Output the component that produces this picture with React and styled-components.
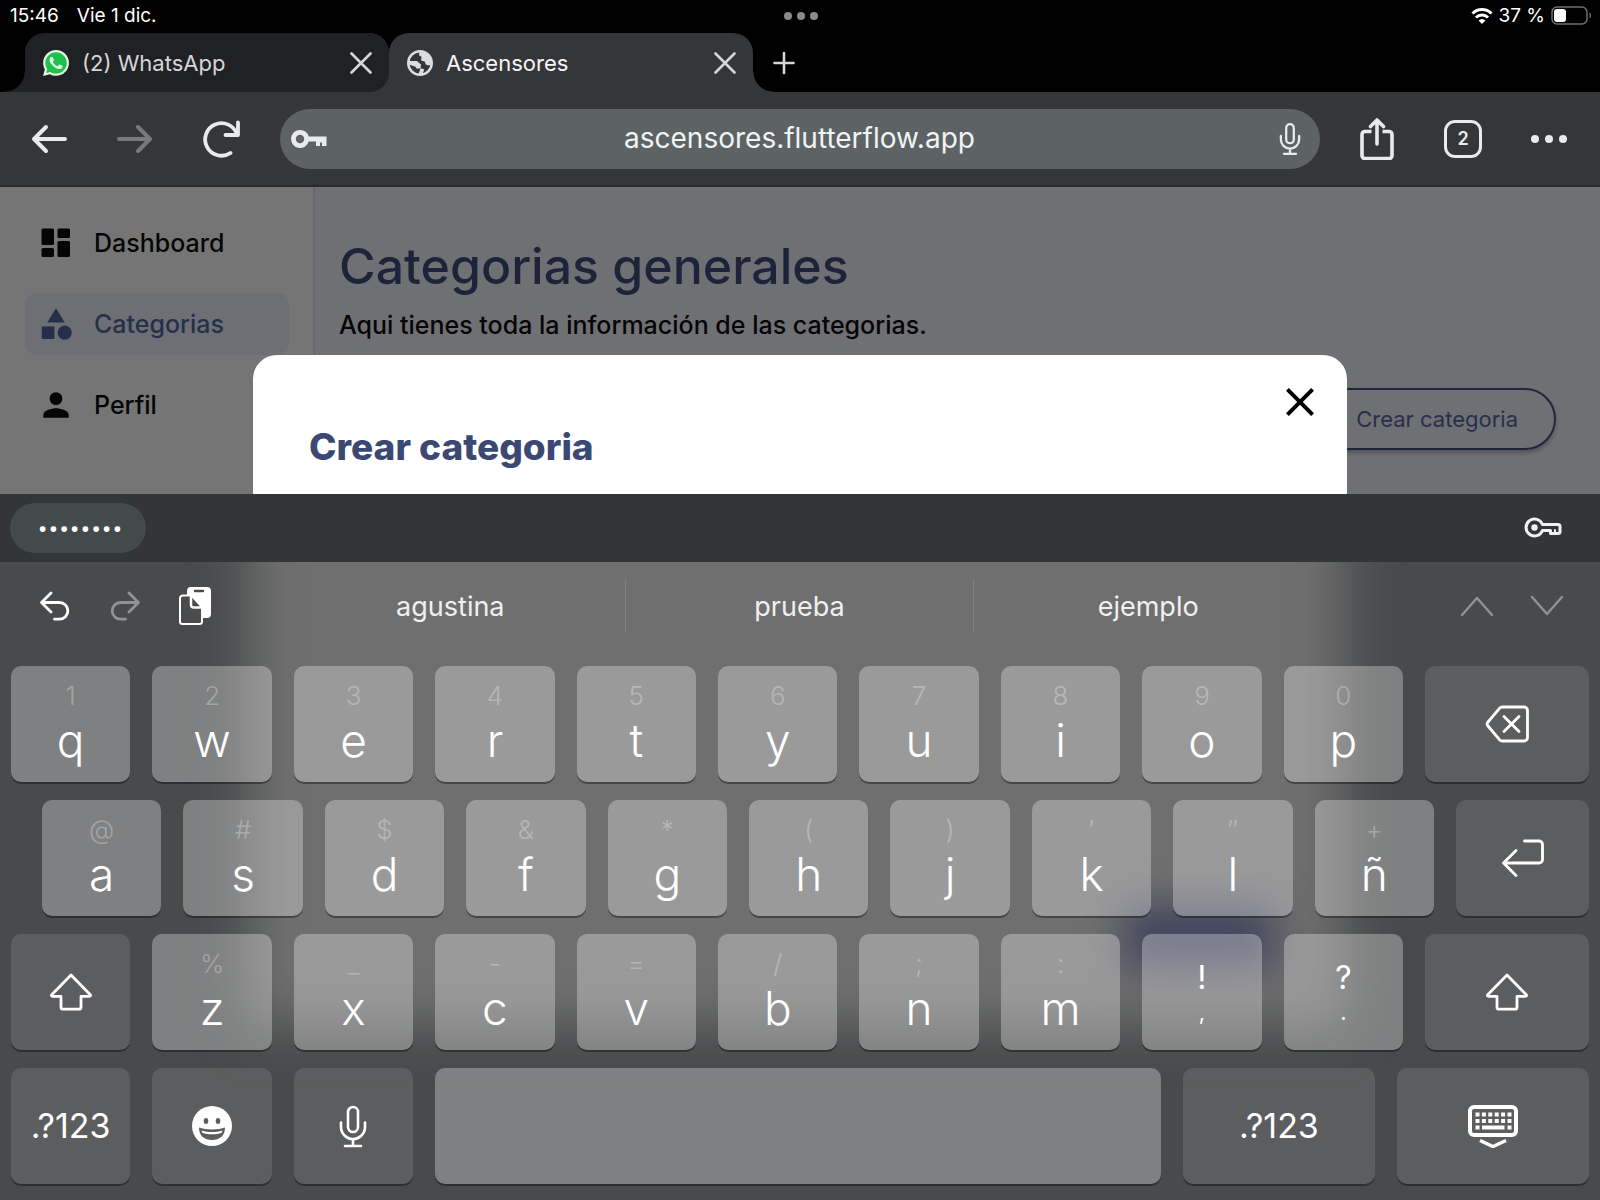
import styled, { createGlobalStyle } from "styled-components";
import { MdCategory, MdClose, MdPerson } from "react-icons/md";

const GlobalStyle = createGlobalStyle`
  * {
    box-sizing: border-box;
  }
  body {
    margin: 0;
    background: #000;
    font-family: Inter, "Liberation Sans", sans-serif;
  }
  button {
    margin: 0;
    padding: 0;
    border: none;
    background: none;
    color: inherit;
    font: inherit;
    cursor: pointer;
  }
  svg {
    display: block;
    flex: none;
  }
`;

const Screen = styled.div`
  display: flex;
  flex-direction: column;
  min-height: 100vh;
  overflow: hidden;
`;

/* ---------- status bar ---------- */

const StatusBar = styled.header`
  display: grid;
  grid-template-columns: 1fr auto 1fr;
  align-items: center;
  height: 33px;
  padding: 0 8px 2px 10px;
  color: #fff;
  font-size: 19px;
  line-height: 24px;
`;

const StatusLeft = styled.div`
  display: flex;
  gap: 18px;
`;

const StatusRight = styled.div`
  display: flex;
  align-items: center;
  justify-content: flex-end;
  gap: 6px;
`;

/* ---------- tabs ---------- */

const TabStrip = styled.nav`
  display: flex;
  height: 59px;
  padding-left: 5px;
`;

const Flare = styled.span`
  align-self: flex-end;
  width: 20px;
  height: 20px;
  background: radial-gradient(
    circle at ${({ $side }) => ($side === "left" ? "0 0" : "100% 0")},
    transparent 19px,
    ${({ $side }) => ($side === "left" ? "#202124" : "#353639")} 20px
  );
`;

const TabSlot = styled.div`
  width: 364px;
  background: ${({ $active }) => ($active ? "#000" : "linear-gradient(90deg, #202124 50%, #353639 50%)")};
  ${({ $active }) => !$active && "border-radius: 20px 20px 0 0;"}
`;

const Tab = styled.div`
  display: flex;
  align-items: center;
  gap: 13px;
  height: 100%;
  padding: 0 17px 0 18px;
  border-radius: ${({ $active }) => ($active ? "20px 20px 0 0" : "20px 20px 20px 0")};
  background: ${({ $active }) => ($active ? "#353639" : "#202124")};
  color: ${({ $active }) => ($active ? "#f4f5f6" : "#d5d6d9")};
`;

const TabTitle = styled.span`
  flex: 1;
  font-size: 22px;
  line-height: 28px;
`;

const NewTab = styled.button`
  align-self: center;
`;

/* ---------- toolbar ---------- */

const Toolbar = styled.div`
  display: flex;
  align-items: center;
  height: 95px;
  padding: 0 8px 0 6px;
  border-bottom: 2px solid #28292b;
  background: #353638;
  color: #e8eaed;
`;

const ToolButton = styled.button`
  display: grid;
  place-items: center;
  width: 86px;
  height: 60px;
  opacity: ${({ $dim }) => ($dim ? 0.38 : 1)};
`;

const AddressBar = styled.div`
  display: flex;
  flex: 1;
  align-items: center;
  height: 60px;
  margin: 0 14px 0 16px;
  padding: 0 18px 0 11px;
  border-radius: 30px;
  background: #5d6365;
`;

const AddressInput = styled.input`
  flex: 1;
  min-width: 0;
  height: 40px;
  padding: 0 6px 2px 0;
  border: none;
  outline: none;
  background: transparent;
  color: #f1f3f4;
  font-family: inherit;
  font-size: 28px;
  text-align: center;
`;

const TabCount = styled.span`
  display: grid;
  place-items: center;
  width: 38px;
  height: 38px;
  border: 3px solid #e8eaed;
  border-radius: 11px;
  font-size: 18px;
  font-weight: 600;
  line-height: 20px;
`;

/* ---------- web page ---------- */

const Page = styled.div`
  position: relative;
  display: flex;
  flex: 1;
  min-height: 307px;
  overflow: hidden;
  background: #6f7074;
`;

const Sidebar = styled.aside`
  display: flex;
  flex-direction: column;
  gap: 19px;
  width: 315px;
  padding: 25px 24px 0 25px;
  border-right: 2px solid #68686f;
  background: #757575;
`;

const SideLink = styled.a`
  display: flex;
  align-items: center;
  gap: 19px;
  height: 62px;
  padding-left: 12px;
  border-radius: 12px;
  background: ${({ $active }) => ($active ? "#6d6f74" : "transparent")};
  color: ${({ $active }) => ($active ? "#262f4a" : "#050505")};
  font-size: 25px;
  font-weight: 500;
  text-decoration: none;
`;

const Main = styled.main`
  display: flex;
  flex: 1;
  flex-direction: column;
  padding: 49px 44px 0 24px;
`;

const Title = styled.h1`
  margin: 0;
  color: #1d2439;
  font-size: 50px;
  font-weight: 500;
  line-height: 60px;
`;

const Subtitle = styled.p`
  margin: 13px 0 47px;
  color: #050506;
  font-size: 25px;
  font-weight: 500;
  line-height: 32px;
`;

const OutlineButton = styled.button`
  align-self: flex-end;
  height: 62px;
  padding: 0 36px;
  border: 2px solid #1f273d;
  border-radius: 31px;
  box-shadow: 0 3px 4px rgba(0, 0, 0, 0.25);
  color: #262f4a;
  font-size: 22px;
`;

const Overlay = styled.div`
  position: absolute;
  inset: 0;
  padding: 168px 253px 0;
`;

const Dialog = styled.section`
  height: 100%;
  padding: 23px 23px 0 56px;
  border-radius: 24px 24px 0 0;
  background: #fff;
`;

const DialogTop = styled.div`
  display: flex;
  justify-content: flex-end;
  height: 48px;
  color: #000;
`;

const DialogTitle = styled.h2`
  margin: 3px 0 0;
  color: #3b4874;
  font-size: 37px;
  font-weight: 800;
  line-height: 36px;
`;

/* ---------- keyboard ---------- */

const AccessoryBar = styled.div`
  display: flex;
  align-items: center;
  justify-content: space-between;
  height: 68px;
  padding: 0 38px 0 10px;
  background: #343537;
  color: #fff;
`;

const PasswordPill = styled.button`
  width: 136px;
  height: 50px;
  padding-left: 4px;
  border-radius: 25px;
  background: #424a4b;
  font-family: "Open Sans", sans-serif;
  font-size: 39px;
  font-weight: 600;
  line-height: 48px;
`;

const Keyboard = styled.div`
  position: relative;
  overflow: hidden;
  padding: 0 11px 16px;
  background: #484a4b;
  color: #fff;
`;

/* the dialog showing through the translucent keyboard */
const Glow = styled.div`
  position: absolute;
  top: -100px;
  right: 256px;
  bottom: 174px;
  left: 248px;
  background: #6f6f6f;
  filter: blur(26px);
`;

const BlueGlow = styled.div`
  position: absolute;
  right: 326px;
  bottom: 232px;
  width: 150px;
  height: 62px;
  background: #40445d;
  filter: blur(20px);
`;

const SuggestionBar = styled.div`
  position: relative;
  display: grid;
  grid-template-columns: 265px 1fr 267px;
  align-items: center;
  height: 88px;
  margin-bottom: 16px;
`;

const EditTools = styled.div`
  display: flex;
  align-items: center;
  padding-left: 9px;
`;

const EditButton = styled.button`
  display: grid;
  place-items: center;
  width: 70px;
  height: 48px;
  opacity: ${({ $dim }) => ($dim ? 0.4 : 1)};
`;

const NavTools = styled.div`
  display: flex;
  justify-content: flex-end;
  padding-right: 7px;
`;

const Suggestions = styled.div`
  display: grid;
  grid-template-columns: repeat(3, 1fr);
`;

const Suggestion = styled.button`
  height: 54px;
  color: #f0f0f0;
  font-size: 27px;
  & + & {
    border-left: 1px solid rgba(255, 255, 255, 0.12);
  }
`;

const Rows = styled.div`
  position: relative;
  display: flex;
  flex-direction: column;
  gap: 18px;
`;

const Row = styled.div`
  display: flex;
  gap: 22px;
  padding-left: ${({ $indent }) => ($indent ? "31px" : "0")};
`;

const KeyBase = styled.button`
  height: 116px;
  border-radius: 10px;
  box-shadow: 0 2px 0 rgba(0, 0, 0, 0.36);
`;

const LetterKey = styled(KeyBase)`
  display: flex;
  flex: 1 1 0;
  flex-direction: column;
  align-items: center;
  gap: 4px;
  min-width: 0;
  padding-top: 15px;
  background: rgba(255, 255, 255, 0.3);
`;

const Hint = styled.span`
  height: 30px;
  color: rgba(255, 255, 255, 0.3);
  font-size: 26px;
  font-weight: 300;
  line-height: 30px;
`;

const Letter = styled.span`
  font-size: 46px;
  font-weight: 300;
  line-height: 50px;
`;

const MarkKey = styled(LetterKey)`
  gap: 0;
  padding-top: 24px;
`;

const UpperMark = styled.span`
  font-size: 32px;
  line-height: 40px;
`;

const LowerMark = styled.span`
  font-size: 22px;
  line-height: 28px;
`;

const widths = {
  letter: "flex: 0 0 calc((100% - 384px) / 10);",
  grow: "flex: 1 1 0;",
  delete: "flex: 0 0 164px;",
  enter: "flex: 0 0 133px;",
  wide: "flex: 0 0 192px;",
};

const ActionKey = styled(KeyBase)`
  display: grid;
  place-items: center;
  ${({ $size }) => widths[$size]}
  min-width: 0;
  background: rgba(255, 255, 255, ${({ $light }) => ($light ? 0.3 : 0.11)});
  font-size: 34px;
  line-height: 40px;
`;

/* ---------- icons ---------- */

const Line = styled.svg`
  fill: none;
  stroke: currentColor;
  stroke-width: ${({ $weight = 3 }) => $weight};
  stroke-linecap: round;
  stroke-linejoin: round;
`;

const WifiIcon = () => (
  <Line $weight={3} width="22" height="18" viewBox="0 0 22 18">
    <path d="M1.500 6.500a13.500 13.500 0 0 1 19 0M5 10.500a8.500 8.500 0 0 1 12 0" strokeLinecap="butt" />
    <path d="M11 17l-3.400-3.400a5 5 0 0 1 6.800 0z" fill="currentColor" stroke="none" />
  </Line>
);

const BatteryIcon = () => (
  <svg width="41" height="19" viewBox="0 0 41 19" fill="none">
    <rect x="1" y="1" width="35" height="17" rx="5" stroke="#6f6f6f" strokeWidth="1.500" />
    <rect x="3" y="3" width="12" height="13" rx="3" fill="#fff" />
    <path d="M38.500 6.500c2 1 2 5 0 6z" fill="#6f6f6f" />
  </svg>
);

const DotsIcon = ({ width, radius, color }) => (
  <svg width={width} height="12" viewBox={`0 0 ${width} 12`} fill={color}>
    <circle cx={radius} cy="6" r={radius} />
    <circle cx={width / 2} cy="6" r={radius} />
    <circle cx={width - radius} cy="6" r={radius} />
  </svg>
);

const WhatsAppIcon = () => (
  <svg width="26" height="26" viewBox="0 0 24 24">
    <path
      fill="#e4f7e8"
      d="M.057 24l1.687-6.163c-1.041-1.804-1.588-3.849-1.587-5.946.003-6.556 5.338-11.891 11.893-11.891 3.181.001 6.167 1.240 8.413 3.488 2.245 2.248 3.481 5.236 3.480 8.414-.003 6.557-5.338 11.892-11.893 11.892-1.990-.001-3.951-.5-5.688-1.448l-6.305 1.654z"
    />
    <path
      fill="#1fc04b"
      d="M6.654 20.193c1.676.995 3.276 1.591 5.392 1.592 5.448 0 9.886-4.434 9.889-9.885.002-5.462-4.415-9.890-9.881-9.892-5.452 0-9.887 4.434-9.889 9.884-.001 2.225.651 3.891 1.746 5.634l-.999 3.648 3.742-.981z"
    />
    <path
      fill="#e4f7e8"
      d="M18.041 14.729c-.074-.124-.272-.198-.57-.347-.297-.149-1.758-.868-2.031-.967-.272-.099-.47-.149-.669.149-.198.297-.768.967-.941 1.165-.173.198-.347.223-.644.074-.297-.149-1.255-.462-2.390-1.475-.883-.788-1.480-1.761-1.653-2.059-.173-.297-.018-.458.13-.606.134-.133.297-.347.446-.521.151-.172.2-.296.3-.495.099-.198.05-.372-.025-.521-.075-.148-.669-1.611-.916-2.206-.242-.579-.487-.501-.669-.51l-.57-.01c-.198 0-.52.074-.792.372s-1.040 1.016-1.040 2.479 1.065 2.876 1.213 3.074c.149.198 2.095 3.200 5.076 4.487.709.306 1.263.489 1.694.626.712.226 1.360.194 1.872.118.571-.085 1.758-.719 2.006-1.413.248-.695.248-1.290.173-1.414z"
    />
  </svg>
);

const GlobeIcon = () => (
  <svg width="26" height="26" viewBox="0 0 25 25" fill="#dcdde0">
    <circle cx="12.500" cy="12.500" r="11.300" fill="none" stroke="#dcdde0" strokeWidth="2.400" />
    <path d="M12 1.500l-.5 3.500 2.500 1.500-.5 3.500 3.500 1 1 3 3 .8 2.500-.8c1.500-6-3-12.500-11.500-12.500z" />
    <path d="M1.500 10.500h8l4 3.500-.5 3.500-3.500.5-1.500-2-6-2z" />
    <path d="M13 17.500l3.500 1-1.500 5.500-4-.5z" />
  </svg>
);

const CrossIcon = () => (
  <Line $weight={2.6} width="22" height="22" viewBox="0 0 22 22" color="#d5d6d9">
    <path d="M1.500 1.500l19 19M20.500 1.500l-19 19" />
  </Line>
);

const PlusIcon = () => (
  <Line $weight={2.6} width="22" height="24" viewBox="0 0 22 24" color="#d5d6d9">
    <path d="M11 2v20M1.500 12h19" />
  </Line>
);

const BackIcon = () => (
  <Line $weight={4} width="36" height="30" viewBox="0 0 36 30">
    <path d="M34 15H3M15 3L3 15l12 12" />
  </Line>
);

const ForwardIcon = () => (
  <Line $weight={4} width="36" height="30" viewBox="0 0 36 30">
    <path d="M2 15h31M21 3l12 12-12 12" />
  </Line>
);

const ReloadIcon = () => (
  <Line $weight={3.8} width="38" height="38" viewBox="0 0 38 38">
    <path d="M28.500 33A16.300 16.300 0 1 1 35 14.500M36 2.500v12.500H23.500" />
  </Line>
);

const KeyIcon = () => (
  <svg width="36" height="20" viewBox="0 0 36 20" fill="currentColor">
    <path
      fillRule="evenodd"
      d="M9 1a9 9 0 0 1 8.700 6.500H35.500V17h-4.500v-3.500h-2V17h-4v-4.500h-7.300A9 9 0 1 1 9 1zm0 4.800a4.200 4.200 0 1 0 0 8.400 4.200 4.200 0 0 0 0-8.400z"
    />
  </svg>
);

const KeyOutlineIcon = () => (
  <Line $weight={3} width="38" height="22" viewBox="0 0 38 22" color="#f0f1f2">
    <path d="M18.500 7.500H34a2 2 0 0 1 2 2V14.500a2 2 0 0 1-2 2H26.500V13.500H18.500A8.500 8.500 0 1 1 18.500 7.500z" />
    <path d="M31 13v3" strokeWidth="2" />
    <circle cx="10.500" cy="10.500" r="3.200" fill="currentColor" stroke="none" />
  </Line>
);

const MicIcon = ({ width, height, weight }) => (
  <Line $weight={weight} width={width} height={height} viewBox="0 0 28 42">
    <rect x="9" y="1.500" width="10" height="25" rx="5" />
    <path d="M2 17v4.500a12 12 0 0 0 24 0V17M14 33.500V40M6 40.500h16" />
  </Line>
);

const ShareIcon = () => (
  <Line $weight={3.6} width="34" height="42" viewBox="0 0 34 42">
    <path
      d="M11.500 13.500H5A3 3 0 0 0 2 16.500v21A3 3 0 0 0 5 40.500h24a3 3 0 0 0 3-3v-21a3 3 0 0 0-3-3h-6.500"
      strokeLinecap="butt"
    />
    <path d="M17 26V2.500M10.500 8.500L17 2l6.500 6.500" />
  </Line>
);

const DashboardIcon = () => (
  <svg width="38" height="38" viewBox="0 0 38 38" fill="currentColor">
    <rect x="4.500" y="4.500" width="12.500" height="16.500" rx="1.500" />
    <rect x="4.500" y="24" width="12.500" height="9" rx="1.500" />
    <rect x="20.500" y="4.500" width="12.500" height="9.500" rx="1.500" />
    <rect x="20.500" y="17" width="12.500" height="16" rx="1.500" />
  </svg>
);

const UndoIcon = () => (
  <Line $weight={2.8} width="30" height="30" viewBox="0 0 30 30">
    <path d="M11 2L1.500 11.500 11 21M2 11.500h17.500a8.300 8.300 0 0 1 0 16.700H14.500" />
  </Line>
);

const RedoIcon = () => (
  <Line $weight={2.8} width="30" height="30" viewBox="0 0 30 30">
    <path d="M19 2l9.500 9.500L19 21M28 11.500H10.500a8.300 8.300 0 0 0 0 16.700H15.500" />
  </Line>
);

const PasteIcon = () => (
  <svg width="32" height="40" viewBox="0 0 32 40" fill="none">
    <path d="M12 1h16a4 4 0 0 1 4 4v23a4 4 0 0 1-4 4H8V5a4 4 0 0 1 4-4z" fill="#fff" />
    <path d="M16 5h8" stroke="#4a4b4c" strokeWidth="2.500" strokeLinecap="round" />
    <path
      d="M4 9.500h8.500L23 21v14.500A2.500 2.500 0 0 1 20.500 38h-17A2.500 2.500 0 0 1 1 35.500V12.500a3 3 0 0 1 3-3z"
      fill="#4a4b4c"
      stroke="#fff"
      strokeWidth="2"
    />
    <path d="M12 9.500V19a2.500 2.500 0 0 0 2.500 2.500H23" stroke="#fff" strokeWidth="2.500" />
  </svg>
);

const ChevronIcon = ({ down }) => (
  <Line $weight={2.4} width="34" height="22" viewBox="0 0 34 22">
    <path d={down ? "M2 2l15 17L32 2" : "M2 20L17 3l15 17"} />
  </Line>
);

const DeleteIcon = () => (
  <Line $weight={2.8} width="44" height="38" viewBox="0 0 44 38">
    <path d="M17.500 2h21.500A3.500 3.500 0 0 1 42.500 5.500v27a3.500 3.500 0 0 1-3.500 3.500H17.500a4 4 0 0 1-3-1.300L3 21a3 3 0 0 1 0-4L14.500 3.300A4 4 0 0 1 17.500 2zM19 11.500l15 15M34 11.500l-15 15" />
  </Line>
);

const EnterIcon = () => (
  <Line $weight={2.8} width="42" height="38" viewBox="0 0 42 38">
    <path d="M22.500 2h14.500a3.500 3.500 0 0 1 3.500 3.500v15a3.500 3.500 0 0 1-3.500 3.500H2M14 11.500L1.500 24 14 36.500" />
  </Line>
);

const ShiftIcon = () => (
  <Line $weight={2.8} width="42" height="38" viewBox="0 0 42 38">
    <path d="M21 2L40.300 21.700a1 1 0 0 1-.7 1.700H31V34.200a2 2 0 0 1-2 2H13a2 2 0 0 1-2-2V23.400H2.400a1 1 0 0 1-.7-1.700z" />
  </Line>
);

const SmileyIcon = () => (
  <svg width="40" height="40" viewBox="0 0 40 40">
    <circle cx="20" cy="20" r="20" fill="#fff" />
    <ellipse cx="14" cy="15" rx="2.300" ry="3" fill="#5c5d5f" />
    <ellipse cx="26" cy="15" rx="2.300" ry="3" fill="#5c5d5f" />
    <path d="M7 21.500c7 2.500 19 2.500 26 0C33 30 27.500 34 20 34S7 30 7 21.500z" fill="#5c5d5f" />
    <path d="M9.500 24.500c6.500 2 14.500 2 21 0l-.8 2.200c-6 2-13.400 2-19.400 0z" fill="#fff" />
  </svg>
);

const HideKeyboardIcon = () => (
  <svg width="50" height="44" viewBox="0 0 50 44" fill="none">
    <rect x="2" y="3" width="46" height="28" rx="4" stroke="#fff" strokeWidth="4" />
    <path d="M7.500 10.500h36M7.500 17h36" stroke="#fff" strokeWidth="4" strokeDasharray="4 2.400" />
    <path d="M7.500 23.500h4M14 23.500h22.500M39.500 23.500h4" stroke="#fff" strokeWidth="4" />
    <path d="M12 36.500l13 6 13-6" stroke="#fff" strokeWidth="3.500" />
  </svg>
);

/* ---------- data ---------- */

const topRow = [["1", "q"], ["2", "w"], ["3", "e"], ["4", "r"], ["5", "t"], ["6", "y"], ["7", "u"], ["8", "i"], ["9", "o"], ["0", "p"]];
const homeRow = [["@", "a"], ["#", "s"], ["$", "d"], ["&", "f"], ["*", "g"], ["(", "h"], [")", "j"], ["′", "k"], ["″", "l"], ["+", "ñ"]];
const bottomRow = [["%", "z"], ["_", "x"], ["-", "c"], ["=", "v"], ["/", "b"], [";", "n"], [":", "m"]];

const Letters = ({ keys }) =>
  keys.map(([hint, letter]) => (
    <LetterKey key={letter} type="button">
      <Hint>{hint}</Hint>
      <Letter>{letter}</Letter>
    </LetterKey>
  ));

const BrowserTab = ({ active, icon, title }) => (
  <TabSlot $active={active}>
    <Tab $active={active}>
      {icon}
      <TabTitle>{title}</TabTitle>
      <button type="button" aria-label="Cerrar pestaña">
        <CrossIcon />
      </button>
    </Tab>
  </TabSlot>
);

export default function App() {
  return (
    <Screen>
      <GlobalStyle />
      <StatusBar>
        <StatusLeft>
          <span>15:46</span>
          <span>Vie 1 dic.</span>
        </StatusLeft>
        <DotsIcon width={34} radius={4} color="#8a8a8a" />
        <StatusRight>
          <WifiIcon />
          <span>37 %</span>
          <BatteryIcon />
        </StatusRight>
      </StatusBar>

      <TabStrip>
        <Flare $side="left" />
        <BrowserTab icon={<WhatsAppIcon />} title="(2) WhatsApp" />
        <BrowserTab active icon={<GlobeIcon />} title="Ascensores" />
        <Flare $side="right" />
        <NewTab type="button" aria-label="Nueva pestaña">
          <PlusIcon />
        </NewTab>
      </TabStrip>

      <Toolbar>
        <ToolButton type="button" aria-label="Atrás">
          <BackIcon />
        </ToolButton>
        <ToolButton type="button" aria-label="Adelante" $dim>
          <ForwardIcon />
        </ToolButton>
        <ToolButton type="button" aria-label="Recargar">
          <ReloadIcon />
        </ToolButton>
        <AddressBar>
          <KeyIcon />
          <AddressInput aria-label="Dirección" defaultValue="ascensores.flutterflow.app" />
          <button type="button" aria-label="Búsqueda por voz">
            <MicIcon width={24} height={32} weight={3} />
          </button>
        </AddressBar>
        <ToolButton type="button" aria-label="Compartir">
          <ShareIcon />
        </ToolButton>
        <ToolButton type="button" aria-label="Pestañas">
          <TabCount>2</TabCount>
        </ToolButton>
        <ToolButton type="button" aria-label="Más">
          <DotsIcon width={36} radius={4} color="#e8eaed" />
        </ToolButton>
      </Toolbar>

      <Page>
        <Sidebar>
          <SideLink href="#dashboard">
            <DashboardIcon />
            Dashboard
          </SideLink>
          <SideLink href="#categorias" $active>
            <MdCategory size={38} />
            Categorias
          </SideLink>
          <SideLink href="#perfil">
            <MdPerson size={38} />
            Perfil
          </SideLink>
        </Sidebar>
        <Main>
          <Title>Categorias generales</Title>
          <Subtitle>Aqui tienes toda la información de las categorias.</Subtitle>
          <OutlineButton type="button">Crear categoria</OutlineButton>
        </Main>
        <Overlay>
          <Dialog role="dialog" aria-labelledby="dialog-title">
            <DialogTop>
              <button type="button" aria-label="Cerrar">
                <MdClose size={48} />
              </button>
            </DialogTop>
            <DialogTitle id="dialog-title">Crear categoria</DialogTitle>
          </Dialog>
        </Overlay>
      </Page>

      <AccessoryBar>
        <PasswordPill type="button" aria-label="Contraseña guardada">········</PasswordPill>
        <button type="button" aria-label="Contraseñas">
          <KeyOutlineIcon />
        </button>
      </AccessoryBar>

      <Keyboard>
        <Glow />
        <BlueGlow />
        <SuggestionBar>
          <EditTools>
            <EditButton type="button" aria-label="Deshacer">
              <UndoIcon />
            </EditButton>
            <EditButton type="button" aria-label="Rehacer" $dim>
              <RedoIcon />
            </EditButton>
            <EditButton type="button" aria-label="Pegar">
              <PasteIcon />
            </EditButton>
          </EditTools>
          <Suggestions>
            <Suggestion type="button">agustina</Suggestion>
            <Suggestion type="button">prueba</Suggestion>
            <Suggestion type="button">ejemplo</Suggestion>
          </Suggestions>
          <NavTools>
            <EditButton type="button" aria-label="Campo anterior" $dim>
              <ChevronIcon />
            </EditButton>
            <EditButton type="button" aria-label="Campo siguiente" $dim>
              <ChevronIcon down />
            </EditButton>
          </NavTools>
        </SuggestionBar>

        <Rows>
          <Row>
            <Letters keys={topRow} />
            <ActionKey type="button" aria-label="Borrar" $size="delete">
              <DeleteIcon />
            </ActionKey>
          </Row>
          <Row $indent>
            <Letters keys={homeRow} />
            <ActionKey type="button" aria-label="Intro" $size="enter">
              <EnterIcon />
            </ActionKey>
          </Row>
          <Row>
            <ActionKey type="button" aria-label="Mayúsculas" $size="grow">
              <ShiftIcon />
            </ActionKey>
            <Letters keys={bottomRow} />
            <MarkKey type="button">
              <UpperMark>!</UpperMark>
              <LowerMark>,</LowerMark>
            </MarkKey>
            <MarkKey type="button">
              <UpperMark>?</UpperMark>
              <LowerMark>.</LowerMark>
            </MarkKey>
            <ActionKey type="button" aria-label="Mayúsculas" $size="delete">
              <ShiftIcon />
            </ActionKey>
          </Row>
          <Row>
            <ActionKey type="button" $size="letter">.?123</ActionKey>
            <ActionKey type="button" aria-label="Emoji" $size="letter">
              <SmileyIcon />
            </ActionKey>
            <ActionKey type="button" aria-label="Dictado" $size="letter">
              <MicIcon width={28} height={43} weight={2.6} />
            </ActionKey>
            <ActionKey type="button" aria-label="Espacio" $size="grow" $light />
            <ActionKey type="button" $size="wide">.?123</ActionKey>
            <ActionKey type="button" aria-label="Ocultar teclado" $size="wide">
              <HideKeyboardIcon />
            </ActionKey>
          </Row>
        </Rows>
      </Keyboard>
    </Screen>
  );
}
